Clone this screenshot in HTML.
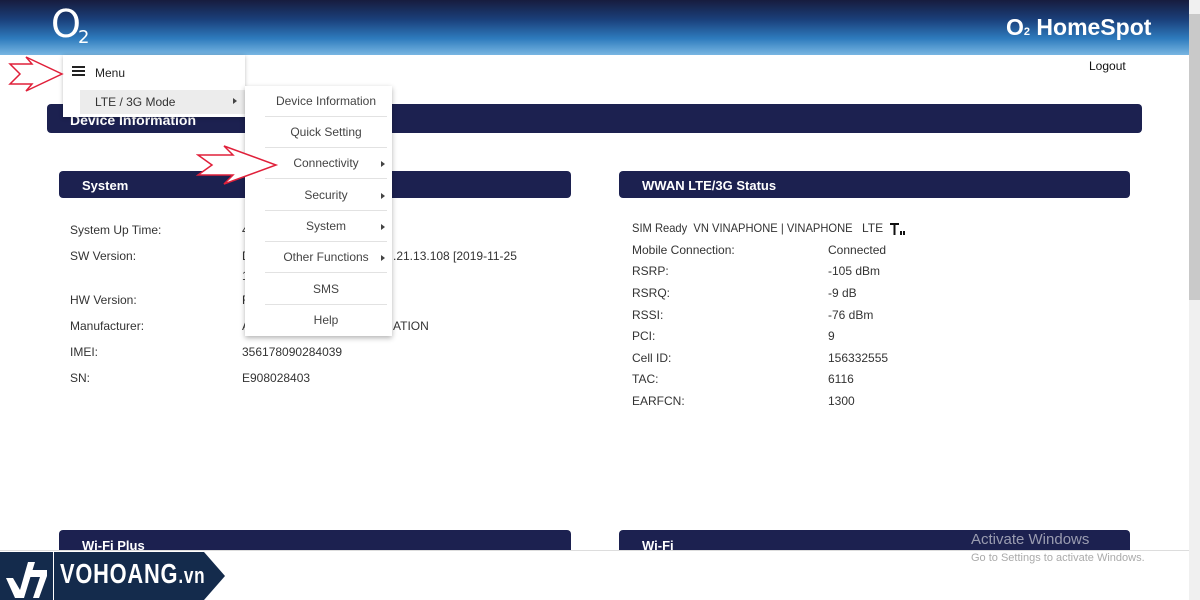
<!DOCTYPE html>
<html><head><meta charset="utf-8"><style>
*{margin:0;padding:0;box-sizing:border-box}
body{width:1200px;height:600px;overflow:hidden;position:relative;background:#fff;font-family:"Liberation Sans",sans-serif;color:#333;font-size:12px}
.abs{position:absolute}
.hdr{left:0;top:0;width:1189px;height:55px;background:linear-gradient(#171c3e 0%,#1a3f7a 35%,#2e7bbd 70%,#78b6e2 100%)}
.bar{background:#1c2150;color:#fff;font-weight:bold;border-radius:4px}
.row{position:absolute;font-size:12px;color:#333;white-space:nowrap}
.sub div.it{position:absolute;left:20px;width:122px;text-align:center;font-size:12px;color:#444;border-bottom:1px solid #e2e2e2;height:31px;line-height:31px}
.tri{position:absolute;width:0;height:0;border-left:4px solid #444;border-top:3px solid transparent;border-bottom:3px solid transparent}
</style></head><body>
<div class="abs hdr"></div>
<div class="abs" style="left:51px;top:2px;color:#fff;font-size:38px;font-family:'DejaVu Sans',sans-serif">O</div>
<div class="abs" style="left:78px;top:27px;color:#fff;font-size:18px;font-family:'DejaVu Sans',sans-serif">2</div>
<div class="abs" style="left:1006px;top:14px;color:#fff;font-size:23px;font-weight:bold">O<span style="font-size:11px">2</span> HomeSpot</div>
<div class="abs" style="left:1089px;top:59px;font-size:12px;color:#111">Logout</div>
<div class="abs" style="left:1189px;top:0;width:11px;height:600px;background:#f0f0f0"></div>
<div class="abs" style="left:1189px;top:14px;width:11px;height:286px;background:#c9c9c9"></div>

<div class="abs bar" style="left:47px;top:104px;width:1095px;height:29px;font-size:14px;padding:8px 0 0 23px">Device Information</div>
<div class="abs bar" style="left:59px;top:171px;width:512px;height:27px;font-size:13px;padding:7px 0 0 23px">System</div>
<div class="abs bar" style="left:619px;top:171px;width:511px;height:27px;font-size:13px;padding:7px 0 0 23px">WWAN LTE/3G Status</div>

<div class="row" style="left:70px;top:223px">System Up Time:</div><div class="row" style="left:242px;top:223px">4</div>
<div class="row" style="left:70px;top:249px">SW Version:</div><div class="row" style="left:242px;top:249px">D</div><div class="row" style="left:393px;top:249px">.21.13.108 [2019-11-25</div><div class="row" style="left:242px;top:269px">1</div>
<div class="row" style="left:70px;top:293px">HW Version:</div><div class="row" style="left:242px;top:293px">F</div>
<div class="row" style="left:70px;top:319px">Manufacturer:</div><div class="row" style="left:242px;top:319px">A</div><div class="row" style="left:393px;top:319px">ATION</div>
<div class="row" style="left:70px;top:345px">IMEI:</div><div class="row" style="left:242px;top:345px">356178090284039</div>
<div class="row" style="left:70px;top:371px">SN:</div><div class="row" style="left:242px;top:371px">E908028403</div>

<div class="row" style="left:632px;top:221px;transform:scaleX(.93);transform-origin:left">SIM Ready&nbsp; VN VINAPHONE | VINAPHONE</div>
<div class="row" style="left:862px;top:221px">LTE</div>
<svg class="abs" style="left:889px;top:222px" width="18" height="14"><path d="M1 1h9v2H6.5v10h-2V3H1z" fill="#111"/><rect x="11" y="9" width="2" height="4" fill="#111"/><rect x="14" y="9" width="2" height="4" fill="#111"/></svg>
<div class="row" style="left:632px;top:243px">Mobile Connection:</div><div class="row" style="left:828px;top:243px">Connected</div>
<div class="row" style="left:632px;top:264px">RSRP:</div><div class="row" style="left:828px;top:264px">-105 dBm</div>
<div class="row" style="left:632px;top:286px">RSRQ:</div><div class="row" style="left:828px;top:286px">-9 dB</div>
<div class="row" style="left:632px;top:308px">RSSI:</div><div class="row" style="left:828px;top:308px">-76 dBm</div>
<div class="row" style="left:632px;top:329px">PCI:</div><div class="row" style="left:828px;top:329px">9</div>
<div class="row" style="left:632px;top:351px">Cell ID:</div><div class="row" style="left:828px;top:351px">156332555</div>
<div class="row" style="left:632px;top:372px">TAC:</div><div class="row" style="left:828px;top:372px">6116</div>
<div class="row" style="left:632px;top:394px">EARFCN:</div><div class="row" style="left:828px;top:394px">1300</div>

<div class="abs bar" style="left:59px;top:530px;width:512px;height:20px;font-size:13px;padding:8px 0 0 23px;overflow:hidden;border-radius:4px 4px 0 0">Wi-Fi Plus</div>
<div class="abs bar" style="left:619px;top:530px;width:511px;height:20px;font-size:13px;padding:8px 0 0 23px;overflow:hidden;border-radius:4px 4px 0 0">Wi-Fi</div>
<div class="abs" style="left:0;top:550px;width:1189px;height:50px;background:#fff;border-top:1px solid #ddd"></div>
<div class="abs" style="left:971px;top:531px;font-size:15px;color:#9a9cb0">Activate Windows</div>
<div class="abs" style="left:971px;top:552px;font-size:11px;color:#aaa">Go to Settings to activate Windows.</div>

<div class="abs" style="left:63px;top:55px;width:182px;height:62px;background:#fff;box-shadow:0 1px 4px rgba(0,0,0,.25)"></div>
<div class="abs" style="left:72px;top:66px;width:13px;height:2px;background:#222;box-shadow:0 4px 0 #222,0 8px 0 #222"></div>
<div class="abs" style="left:95px;top:66px;font-size:12px;color:#222">Menu</div>
<div class="abs" style="left:80px;top:90px;width:165px;height:24px;background:#ececec"></div>
<div class="abs" style="left:95px;top:95px;font-size:12px;color:#333">LTE / 3G Mode</div>
<div class="tri" style="left:233px;top:98px"></div>

<div class="abs sub" style="left:245px;top:86px;width:147px;height:250px;background:#fff;box-shadow:0 2px 5px rgba(0,0,0,.3)">
<div class="it" style="top:0">Device Information</div>
<div class="it" style="top:31px">Quick Setting</div>
<div class="it" style="top:62px">Connectivity</div>
<div class="it" style="top:94px">Security</div>
<div class="it" style="top:125px">System</div>
<div class="it" style="top:156px">Other Functions</div>
<div class="it" style="top:188px">SMS</div>
<div class="it" style="top:219px;border:none">Help</div>
<div class="tri" style="left:136px;top:75px"></div>
<div class="tri" style="left:136px;top:107px"></div>
<div class="tri" style="left:136px;top:138px"></div>
<div class="tri" style="left:136px;top:169px"></div>
</div>

<svg class="abs" style="left:8px;top:56px" width="58" height="36"><path d="M2 8h22l-6-7 36 17-36 17 6-7H2l10-10z" fill="#fff" stroke="#e0203a" stroke-width="1.5"/></svg>
<svg class="abs" style="left:196px;top:145px" width="86" height="40"><path d="M2 10h35l-9-9 52 19-52 19 9-9H2l14-10z" fill="#fff" stroke="#e0203a" stroke-width="1.5"/></svg>

<div class="abs" style="left:0;top:552px;width:53px;height:48px;background:#142b4c"></div>
<svg class="abs" style="left:0;top:552px" width="53" height="48"><path d="M6 26l7 0 7 12 8-28h7l-11 36h-9z" fill="#fff"/><path d="M30 18h17v6l-8 22h-6l7-21h-11z" fill="#fff"/></svg>
<div class="abs" style="left:54px;top:552px;width:171px;height:48px;background:#142b4c;clip-path:polygon(0 0,150px 0,171px 24px,150px 48px,0 48px)"></div>
<div class="abs" style="left:60px;top:558px;color:#fff;font-weight:bold;font-size:28px;letter-spacing:1px;font-family:'Liberation Sans Narrow','Liberation Sans',sans-serif;transform:scaleX(.78);transform-origin:left">VOHOANG<span style="font-size:22px">.vn</span></div>
</body></html>
